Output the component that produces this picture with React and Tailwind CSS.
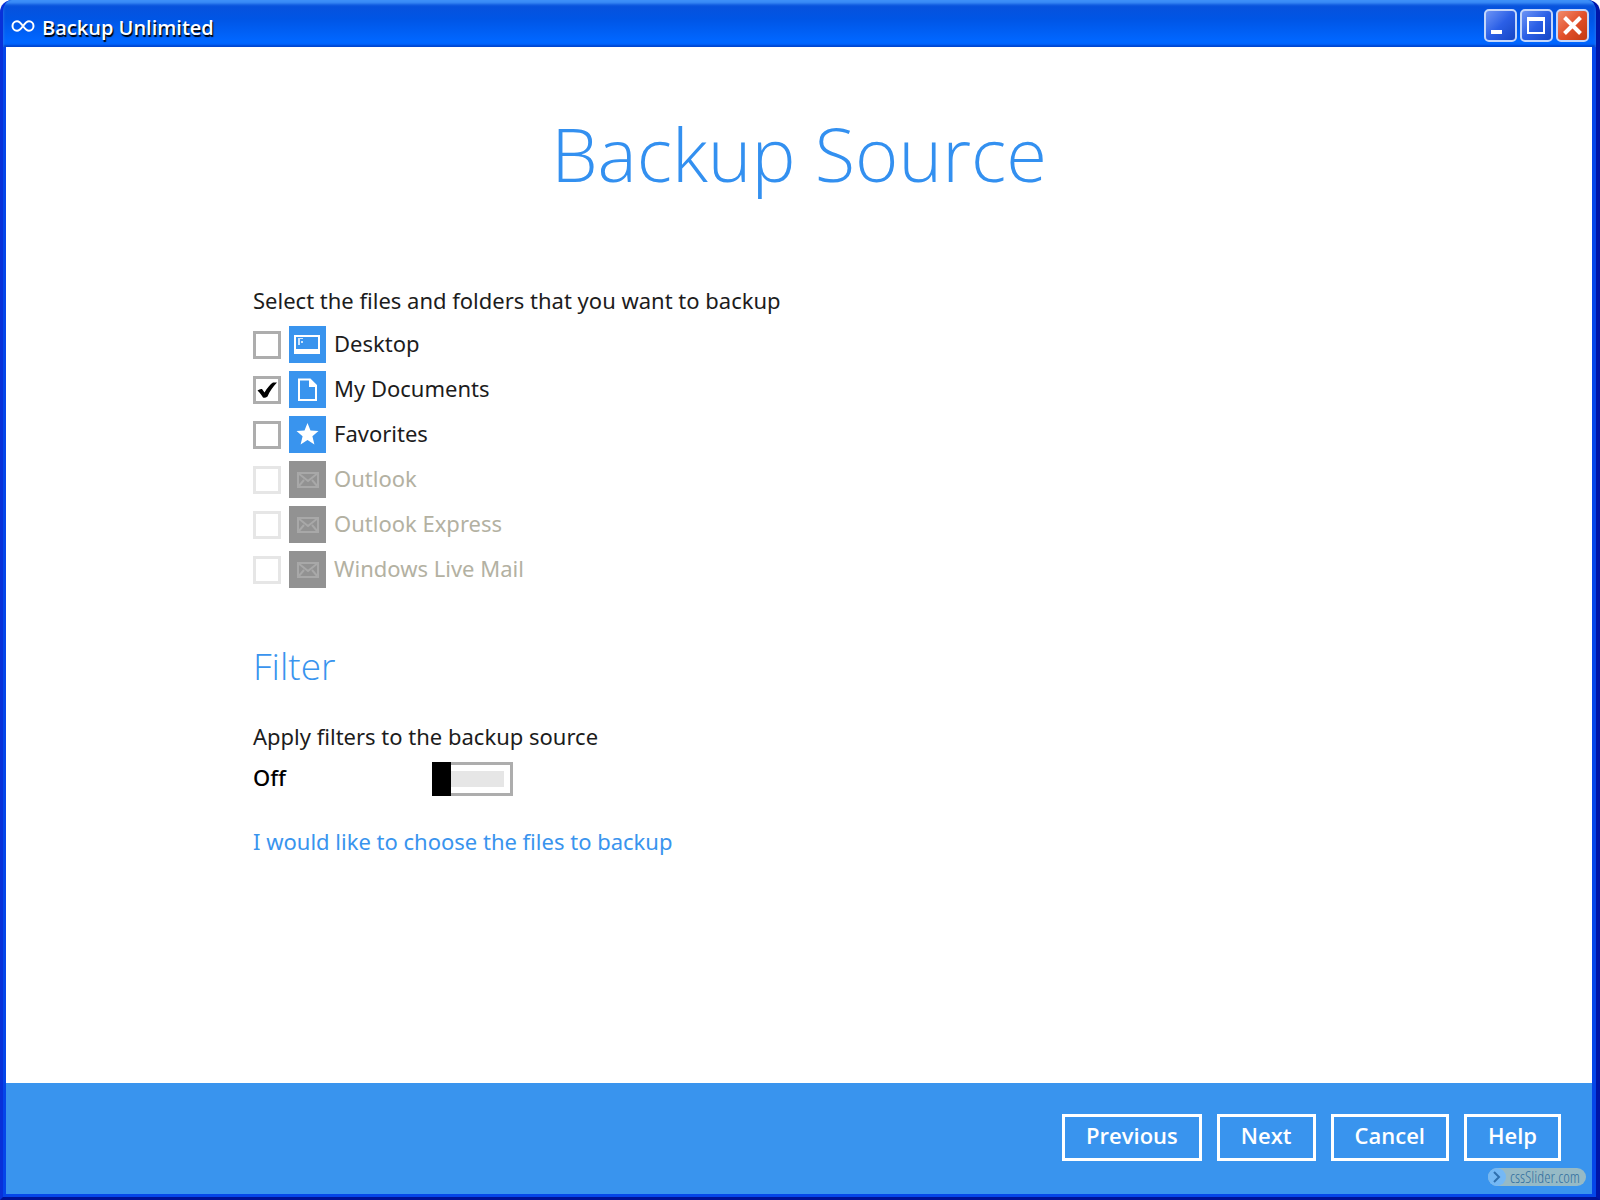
import { useState } from "react";

const initialSources = [
  { id: "desktop", label: "Desktop", Icon: DesktopIcon, checked: false },
  { id: "documents", label: "My Documents", Icon: DocumentIcon, checked: true },
  { id: "favorites", label: "Favorites", Icon: StarIcon, checked: false },
  { id: "outlook", label: "Outlook", Icon: MailIcon, disabled: true },
  { id: "outlook-express", label: "Outlook Express", Icon: MailIcon, disabled: true },
  { id: "live-mail", label: "Windows Live Mail", Icon: MailIcon, disabled: true },
];

function DesktopIcon() {
  return (
    <svg viewBox="0 0 37 37" className="size-full" fill="none">
      <path fill="#fff" fillRule="evenodd" d="M5 9h26v19H5zM7 11v12h22V11z" />
      <path fill="#fff" fillOpacity="0.75" d="M9 12h2v7H9zM11 12h3v1h-3zM12 15h2v2h-2z" />
    </svg>
  );
}

function DocumentIcon() {
  return (
    <svg viewBox="0 0 37 37" className="size-full" fill="none">
      <path stroke="#fff" strokeWidth="2" d="M10 8.500h11l6 6V29H10z" />
      <path fill="#fff" d="M20 8v8h8z" />
    </svg>
  );
}

function StarIcon() {
  return (
    <svg viewBox="0 0 37 37" className="size-full">
      <path
        fill="#fff"
        d="M18.500 7l3 7.500 8 .5-6.100 5.200 2 8.300-6.900-4.500-6.900 4.500 2-8.300L7.500 15l8-.5z"
      />
    </svg>
  );
}

function MailIcon() {
  return (
    <svg viewBox="0 0 37 37" className="size-full" fill="none" stroke="#a8a8a8" strokeWidth="2">
      <path d="M9 12h20v14H9z" />
      <path d="M9 12l10 8 10-8M9 26l6-7M29 26l-6-7" />
    </svg>
  );
}

function CheckMark() {
  return (
    <svg
      viewBox="0 0 28 28"
      className="pointer-events-none col-start-1 row-start-1 hidden size-7 peer-checked:block"
    >
      <path d="M4.500 14.500q2.500-2 4.500-1.500l2.500 3.500C14 12 17.500 8 20 6.500h4c-4 4-7.500 9-9.500 14q-2.500 2-4.500 1c-1.500-2.500-3-4.500-5.500-7z" />
    </svg>
  );
}

function TitleButton({ label, tone, children }) {
  return (
    <button
      aria-label={label}
      className={`size-[33px] rounded-[5px] border-2 border-[#c4d6fa] ${tone}`}
    >
      <svg viewBox="0 0 29 29" className="size-full" fill="none" stroke="#fff">
        {children}
      </svg>
    </button>
  );
}

function TitleBar() {
  const blue = "bg-linear-135 from-[#6d93f5] via-[#2b5fe6] to-[#1546c4]";
  return (
    <header className="flex h-[47px] shrink-0 items-center bg-linear-to-b from-[#0a50d8] from-0% via-[#0055e5] via-40% to-[#0066ff] to-85% pr-[7px] pl-2 shadow-[inset_0_4px_3px_#3d8ff8,inset_0_-2px_2px_#0046d0]">
      <svg viewBox="0 0 24 14" className="mt-1 h-3.5 w-6" fill="none" stroke="#fff" strokeWidth="2">
        <path d="M12 7C9.500 3.500 8 2.200 6 2.200a4.500 4.800 0 0 0 0 9.600c2 0 3.500-1.300 6-4.800s4-4.800 6-4.800a4.500 4.800 0 0 1 0 9.600c-2 0-3.500-1.300-6-4.800z" />
      </svg>
      <span className="mt-2 ml-[7px] grow text-[20px] leading-7 font-semibold text-white [text-shadow:1px_2px_1px_#000]">
        Backup Unlimited
      </span>
      <div className="mt-1 flex gap-[3px]">
        <TitleButton label="Minimize" tone={blue}>
          <path strokeWidth="4" d="M5 21h11" />
        </TitleButton>
        <TitleButton label="Maximize" tone={blue}>
          <path strokeWidth="2" d="M6 8v14h16V8" />
          <path strokeWidth="4" d="M5 8h18" />
        </TitleButton>
        <TitleButton
          label="Close"
          tone="bg-linear-135 from-[#f08a6a] via-[#e2502a] to-[#c33a10]"
        >
          <path strokeWidth="4" d="M6.500 6.500l16 16M22.500 6.500l-16 16" />
        </TitleButton>
      </div>
    </header>
  );
}

function SourceRow({ source, onToggle }) {
  const { id, label, Icon, checked, disabled } = source;
  return (
    <li className="flex h-[37px] items-center">
      <span className="grid">
        <input
          id={id}
          type="checkbox"
          checked={!!checked}
          disabled={disabled}
          onChange={() => onToggle(id)}
          className="peer col-start-1 row-start-1 size-7 appearance-none border-[3px] border-[#adadad] bg-white disabled:border-[#e6e6e6]"
        />
        <CheckMark />
      </span>
      <label
        htmlFor={id}
        className={`flex h-full items-center ${disabled ? "text-[#b3b1a2]" : "text-[#1c1c1c]"}`}
      >
        <span className={`mx-2 size-[37px] ${disabled ? "bg-[#929292]" : "bg-[#3994ee]"}`}>
          <Icon />
        </span>
        <span className="-mt-1">{label}</span>
      </label>
    </li>
  );
}

export default function App() {
  const [sources, setSources] = useState(initialSources);
  const [filterOn, setFilterOn] = useState(false);

  const toggle = (id) =>
    setSources((list) => list.map((s) => (s.id === id ? { ...s, checked: !s.checked } : s)));

  return (
    <div className="flex min-h-screen flex-col overflow-hidden rounded-t-xl border-r-4 border-b-[3px] border-l-[3px] border-r-[#0016a8] border-b-[#001396] border-l-[#0831d9] bg-[#0446ea] font-['Open_Sans','Noto_Sans',sans-serif]">
      <TitleBar />

      {/* Window frame */}
      <div className="flex grow flex-col pr-1 pb-[3px] pl-[3px]">
        {/* Wizard page */}
        <main className="grow bg-white pl-[247px] font-['Noto_Sans','Open_Sans',sans-serif] text-[22px] leading-8 text-[#1c1c1c]">
          <h1 className="mr-[247px] pt-[57px] text-center font-['Open_Sans','Noto_Sans',sans-serif] text-[74px] leading-[100px] font-light text-[#3390f0]">
            Backup Source
          </h1>

          <fieldset className="mt-20">
            <legend>Select the files and folders that you want to backup</legend>
            <ul className="mt-2.5 flex flex-col gap-2">
              {sources.map((s) => (
                <SourceRow key={s.id} source={s} onToggle={toggle} />
              ))}
            </ul>
          </fieldset>

          <h2 className="mt-[52px] font-['Open_Sans','Noto_Sans',sans-serif] text-[37px] leading-[52px] font-light text-[#3994ee]">
            Filter
          </h2>
          <p className="mt-7">Apply filters to the backup source</p>
          <div className="mt-2.5 flex items-center">
            <label htmlFor="filter" className="-mt-1 w-[179px] font-medium text-black">
              {filterOn ? "On" : "Off"}
            </label>
            <span className="relative grid">
              <input
                id="filter"
                type="checkbox"
                role="switch"
                checked={filterOn}
                onChange={() => setFilterOn(!filterOn)}
                className="peer h-[34px] w-[81px] appearance-none border-[3px] border-[#adadad] bg-[#e6e6e6] shadow-[inset_0_0_0_6px_#fff] checked:bg-[#3994ee]"
              />
              <span className="pointer-events-none absolute inset-y-0 left-0 w-[19px] bg-black peer-checked:right-0 peer-checked:left-auto" />
            </span>
          </div>
          <a href="#files" className="mt-[29px] inline-block text-[#3994ee]">
            I would like to choose the files to backup
          </a>
        </main>

        {/* Wizard buttons */}
        <footer className="relative flex h-[111px] shrink-0 items-start justify-end gap-[15px] bg-[#3994ee] pt-[31px] pr-[31px]">
          {["Previous", "Next", "Cancel", "Help"].map((name) => (
            <button
              key={name}
              className="h-[47px] border-[3px] border-white px-[21px] pb-1.5 text-[22px] leading-8 font-semibold text-white"
            >
              {name}
            </button>
          ))}
          <a
            href="#cssslider"
            className="absolute right-1.5 bottom-2 flex h-[18px] items-center gap-1 rounded-full bg-[#96bac6] pr-1.5 font-['Open_Sans_Condensed_Light','Liberation_Sans_Narrow',sans-serif] text-[16px] leading-4 font-light text-[#33709f]"
          >
            <svg viewBox="0 0 18 18" className="size-[18px]" fill="none">
              <circle cx="9" cy="9" r="9" fill="#74b8f5" />
              <path stroke="#2f6fae" strokeWidth="2" d="M6 4l5 5-5 5" />
            </svg>
            cssSlider.com
          </a>
        </footer>
      </div>
    </div>
  );
}
